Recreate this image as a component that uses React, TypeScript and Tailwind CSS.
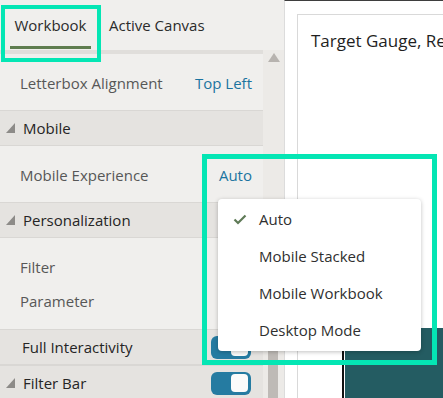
import React from "react";

const Tri = () => (
  <svg width="9" height="10" viewBox="0 0 9 10" className="shrink-0">
    <polygon points="9,0 9,10 0,10" fill="#8d8b88" />
  </svg>
);

const Toggle = () => (
  <div className="w-[40px] h-[23px] rounded-[6px] bg-[#257ba1] flex items-center justify-end pr-[3px]">
    <div className="w-[17px] h-[18px] rounded-[4px] bg-[#fbfbfa]" />
  </div>
);

const Header = ({ label, tri = true, toggle = false }: { label: string; tri?: boolean; toggle?: boolean }) => (
  <div className="h-[36px] shrink-0 flex items-center bg-[#e5e3e0] border-y border-[#d9d7d4] pl-[6px] pr-[12px] text-[15px] text-[#252525]">
    {tri ? <Tri /> : <div className="w-[9px]" />}
    <span className={tri ? "ml-[8px]" : "ml-[7px]"}>{label}</span>
    <div className="flex-1" />
    {toggle && <Toggle />}
  </div>
);

const Row = ({ label, value }: { label: string; value?: string }) => (
  <div className="h-[34px] shrink-0 flex items-center pl-[20px] pr-[11px] text-[15px]">
    <span className="text-[#575757]">{label}</span>
    <div className="flex-1" />
    {value && <span className="text-[#1b74a0]">{value}</span>}
  </div>
);

export default function App() {
  return (
    <div className="relative w-[443px] h-[398px] overflow-hidden flex bg-white font-['Open_Sans',sans-serif]">
      {/* left panel */}
      <div className="w-[284px] shrink-0 flex flex-col bg-[#f0efed] overflow-hidden">
        <div className="h-[50px] shrink-0 flex text-[15px] text-[#2b2b2b]">
          <div className="ml-[10px] w-[81px] flex flex-col">
            <div className="flex-1 flex items-center justify-center pt-[5px]">Workbook</div>
            <div className="h-[3px] bg-[#5f7d4f] mb-[1px]" />
          </div>
          <div className="ml-[18px] flex items-center pt-[5px] pb-[4px]">Active Canvas</div>
        </div>
        <div className="flex flex-1 min-h-0">
          <div className="w-[263px] flex flex-col overflow-hidden">
            <div className="h-[4px] shrink-0 bg-[#e0dedb]" />
            <div className="shrink-0 pt-[12px] pb-[10px]">
              <Row label="Letterbox Alignment" value="Top Left" />
            </div>
            <Header label="Mobile" />
            <div className="shrink-0 pt-[12px] pb-[10px]">
              <Row label="Mobile Experience" value="Auto" />
            </div>
            <Header label="Personalization" />
            <div className="shrink-0 pt-[12px] pb-[11px]">
              <Row label="Filter" />
              <Row label="Parameter" />
            </div>
            <Header label="Full Interactivity" tri={false} toggle />
            <Header label="Filter Bar" toggle />
          </div>
          <div className="w-[21px] flex flex-col bg-[#eceae7] pl-[5px]">
            <svg width="12" height="9" viewBox="0 0 12 9" className="mt-[3px] shrink-0">
              <polygon points="6,0 12,9 0,9" fill="#b7b3af" />
            </svg>
            <div className="flex-1" />
            <div className="w-[10px] h-[100px] shrink-0 bg-[#bebab6]" />
          </div>
        </div>
      </div>
      {/* right area */}
      <div className="flex-1 border-l border-[#dcdcdc] border-t border-t-[#3e3e3e] flex flex-col">
        <div className="ml-[12px] mt-[13px] flex-1 border-l border-t border-[#d9d9d9] flex flex-col">
          <div className="pl-[13px] pt-[13px] text-[17px] text-[#1f1f1f] whitespace-nowrap">Target Gauge, Regional Sales</div>
          <div className="flex-1" />
          <div className="ml-[44px] h-[70px] shrink-0 flex">
            <div className="w-[2px] bg-[#111]" />
            <div className="w-[1px]" />
            <div className="flex-1 bg-[#245c62]" />
          </div>
        </div>
      </div>

      {/* dropdown menu */}
      <div className="absolute left-[218px] top-[199px] w-[203px] pt-[2px] pb-[2px] bg-white rounded-[4px] shadow-[0_1px_4px_rgba(0,0,0,0.25)] text-[15px] text-[#2f2f2f]">
        {["Auto", "Mobile Stacked", "Mobile Workbook", "Desktop Mode"].map((t, i) => (
          <div key={t} className="h-[37px] flex items-center">
            <div className="w-[41px] flex justify-end pr-[12px]">
              {i === 0 && (
                <svg width="14" height="11" viewBox="0 0 14 11">
                  <polyline points="1.5,5.5 5,9 12.5,1.5" fill="none" stroke="#5f7a57" strokeWidth="2.2" />
                </svg>
              )}
            </div>
            <span>{t}</span>
          </div>
        ))}
      </div>

      {/* highlight boxes */}
      <div className="absolute left-[1px] top-[5px] w-[100px] h-[57px] border-[4px] border-[#04e6b4]" />
      <div className="absolute left-[202px] top-[154px] w-[235px] h-[211px] border-[5px] border-[#04e6b4]" />
    </div>
  );
}
